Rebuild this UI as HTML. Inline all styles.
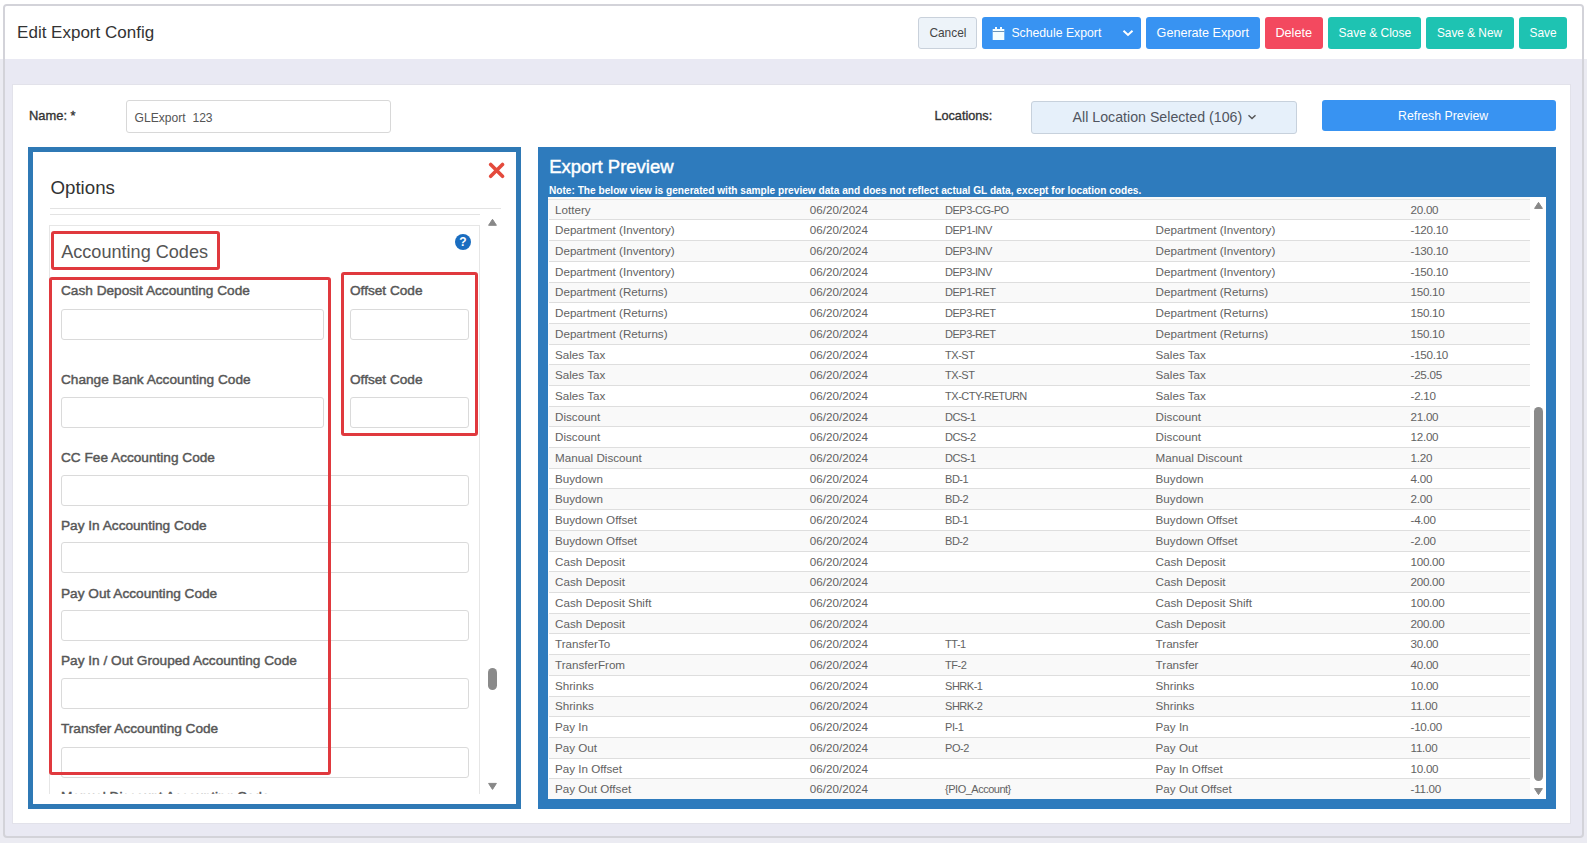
<!DOCTYPE html>
<html><head><meta charset="utf-8">
<style>
*{box-sizing:border-box;margin:0;padding:0}
html,body{width:1587px;height:843px;overflow:hidden;background:#fff;font-family:"Liberation Sans",sans-serif}
.a{position:absolute}
.t{position:absolute;white-space:pre;line-height:1}
.inp{position:absolute;height:31px;border:1px solid #dadada;border-radius:3px;background:#fff}
.red{position:absolute;border:3px solid #e0393e;border-radius:3px}
</style></head><body>
<div class="a" style="left:0;top:59px;width:1587px;height:784px;background:#ebebf2"></div>
<div class="a" style="left:3px;top:4px;width:1581px;height:834px;border:2px solid #d3d3d9;border-radius:4px;background:#e9e9f3;overflow:hidden">
  <div class="a" style="left:0;top:0;width:1580px;height:52.5px;background:#fff"></div>
</div>
<div class="t" style="left:17.10px;top:24.21px;font-size:17px;color:#333;">Edit Export Config</div>
<div class="a" style="left:918px;top:17px;width:59px;height:32px;border-radius:3px;background:#edf3f9;border:1px solid #c9d1db"></div>
<div class="t" style="left:929.40px;top:27.93px;font-size:11.9px;color:#454545;">Cancel</div>
<div class="a" style="left:982px;top:17px;width:159px;height:32px;border-radius:3px;background:#3893f2;border:none"></div>
<div class="t" style="left:1011.40px;top:26.83px;font-size:12.25px;color:#fff;">Schedule Export</div>
<div class="a" style="left:1146px;top:17px;width:114px;height:32px;border-radius:3px;background:#3893f2;border:none"></div>
<div class="t" style="left:1156.60px;top:26.53px;font-size:12.6px;color:#fff;">Generate Export</div>
<div class="a" style="left:1265px;top:17px;width:58px;height:32px;border-radius:3px;background:#f3495f;border:none"></div>
<div class="t" style="left:1275.40px;top:27.25px;font-size:12.7px;color:#fff;">Delete</div>
<div class="a" style="left:1328px;top:17px;width:93px;height:32px;border-radius:3px;background:#1ec3b2;border:none"></div>
<div class="t" style="left:1338.50px;top:27.04px;font-size:12.0px;color:#fff;">Save &amp; Close</div>
<div class="a" style="left:1426px;top:17px;width:88px;height:32px;border-radius:3px;background:#1ec3b2;border:none"></div>
<div class="t" style="left:1436.90px;top:27.77px;font-size:11.85px;color:#fff;">Save &amp; New</div>
<div class="a" style="left:1519px;top:17px;width:48px;height:32px;border-radius:3px;background:#1ec3b2;border:none"></div>
<div class="t" style="left:1529.50px;top:27.93px;font-size:11.9px;color:#fff;">Save</div>
<svg class="a" style="left:992px;top:26px" width="13" height="15" viewBox="0 0 13 15"><path d="M0.7 3H12.3V14H0.7Z" fill="#f4fdff"/><rect x="3" y="1" width="2" height="3" fill="#f4fdff"/><rect x="8" y="1" width="2" height="3" fill="#f4fdff"/><rect x="0.7" y="5" width="11.6" height="0.8" fill="#4a7aa8"/></svg>
<svg class="a" style="left:1122px;top:29px" width="12" height="8" viewBox="0 0 12 8"><path d="M1.5 1.8L6 6L10.5 1.8" fill="none" stroke="#fff" stroke-width="2"/></svg>

<div class="a" style="left:12px;top:84px;width:1559px;height:740px;background:#fff;border:1px solid #e2e2ea"></div>
<div class="t" style="left:29.00px;top:110.28px;font-size:12.9px;color:#333;-webkit-text-stroke:0.35px #333;">Name: *</div>
<div class="a" style="left:125.5px;top:100.3px;width:265.5px;height:33px;border:1px solid #d8d8d8;border-radius:3px"></div>
<div class="t" style="left:134.60px;top:111.56px;font-size:12.1px;color:#555;">GLExport  123</div>
<div class="t" style="left:934.40px;top:110.25px;font-size:12.7px;color:#333;-webkit-text-stroke:0.35px #333;">Locations:</div>
<div class="a" style="left:1031px;top:100.6px;width:266px;height:33px;background:#e6f0fa;border:1px solid #c7d1dc;border-radius:3px"></div>
<div class="t" style="left:1072.60px;top:109.98px;font-size:14.2px;color:#505560;">All Location Selected (106)</div>
<svg class="a" style="left:1247px;top:113px" width="10" height="8" viewBox="0 0 10 8"><path d="M1.5 2.2L5 5.6L8.5 2.2" fill="none" stroke="#555" stroke-width="1.4"/></svg>
<div class="a" style="left:1322px;top:100.2px;width:234px;height:31px;background:#3893f2;border-radius:3px"></div>
<div class="t" style="left:1398.00px;top:109.59px;font-size:12.3px;color:#fff;">Refresh Preview</div>

<div class="a" style="left:28px;top:147px;width:493px;height:662px;border:5px solid #2f79b5;background:#fff"></div>
<div class="t" style="left:50.50px;top:179.27px;font-size:18.7px;color:#333;">Options</div>
<svg class="a" style="left:488px;top:162px" width="17" height="17" viewBox="0 0 17 17"><path d="M2.7 2.5L14.5 14.3M14.5 2.5L2.7 14.3" stroke="#e44a3c" stroke-width="3.6" stroke-linecap="round"/></svg>
<div class="a" style="left:50px;top:208px;width:451px;height:1px;background:#e3e3e3"></div>
<div class="a" style="left:50px;top:214px;width:430px;height:1px;background:#e3e3e3"></div>
<div class="a" style="left:33px;top:215px;width:483px;height:579px;overflow:hidden">
 <div class="a" style="left:-33px;top:-215px;width:600px;height:1200px">
  <div class="a" style="left:49px;top:225px;width:431px;height:700px;border:1px solid #e6e6e6;border-bottom:none"></div>
<div class="t" style="left:61.00px;top:284.25px;font-size:13.65px;color:#575757;-webkit-text-stroke:0.45px #575757;">Cash Deposit Accounting Code</div>
<div class="inp" style="left:60.5px;top:308.5px;width:263px"></div>
<div class="t" style="left:61.00px;top:372.75px;font-size:13.65px;color:#575757;-webkit-text-stroke:0.45px #575757;">Change Bank Accounting Code</div>
<div class="inp" style="left:60.5px;top:396.5px;width:263px"></div>
<div class="t" style="left:61.00px;top:450.75px;font-size:13.65px;color:#575757;-webkit-text-stroke:0.45px #575757;">CC Fee Accounting Code</div>
<div class="inp" style="left:60.5px;top:474.7px;width:408px"></div>
<div class="t" style="left:61.00px;top:518.75px;font-size:13.65px;color:#575757;-webkit-text-stroke:0.45px #575757;">Pay In Accounting Code</div>
<div class="inp" style="left:60.5px;top:542.3px;width:408px"></div>
<div class="t" style="left:61.00px;top:586.65px;font-size:13.65px;color:#575757;-webkit-text-stroke:0.45px #575757;">Pay Out Accounting Code</div>
<div class="inp" style="left:60.5px;top:610.4px;width:408px"></div>
<div class="t" style="left:61.00px;top:654.45px;font-size:13.65px;color:#575757;-webkit-text-stroke:0.45px #575757;">Pay In / Out Grouped Accounting Code</div>
<div class="inp" style="left:60.5px;top:678.3px;width:408px"></div>
<div class="t" style="left:61.00px;top:722.15px;font-size:13.65px;color:#575757;-webkit-text-stroke:0.45px #575757;">Transfer Accounting Code</div>
<div class="inp" style="left:60.5px;top:746.6px;width:408px"></div>
<div class="t" style="left:61.00px;top:789.95px;font-size:13.65px;color:#575757;-webkit-text-stroke:0.45px #575757;">Manual Discount Accounting Code</div>
<div class="inp" style="left:60.5px;top:814.0px;width:408px"></div>
<div class="t" style="left:350.00px;top:284.25px;font-size:13.65px;color:#575757;-webkit-text-stroke:0.45px #575757;">Offset Code</div>
<div class="inp" style="left:350px;top:308.5px;width:118.5px"></div>
<div class="t" style="left:350.00px;top:372.75px;font-size:13.65px;color:#575757;-webkit-text-stroke:0.45px #575757;">Offset Code</div>
<div class="inp" style="left:350px;top:396.5px;width:118.5px"></div>
 </div>
</div>
<div class="red" style="left:51px;top:231px;width:169px;height:39px"></div>
<div class="t" style="left:61.20px;top:242.68px;font-size:18.1px;color:#555;">Accounting Codes</div>
<div class="a" style="left:454.8px;top:234px;width:16px;height:16px;border-radius:50%;background:#1a6dc0"></div>
<div class="t" style="left:459.30px;top:236.44px;font-size:12px;font-weight:bold;color:#fff;">?</div>
<div class="red" style="left:49px;top:277px;width:282px;height:498px"></div>
<div class="red" style="left:341px;top:272px;width:137px;height:164px"></div>
<svg class="a" style="left:487px;top:218px" width="11" height="9"><path d="M1.6 7.3L5.5 1.3L9.4 7.3Z" fill="#888" stroke="#888" stroke-width="1" stroke-linejoin="round"/></svg>
<svg class="a" style="left:487px;top:782px" width="11" height="9"><path d="M1.6 1.4L5.5 7.4L9.4 1.4Z" fill="#888" stroke="#888" stroke-width="1" stroke-linejoin="round"/></svg>
<div class="a" style="left:488px;top:668px;width:9px;height:22px;border-radius:4.5px;background:#8a8a8a"></div>

<div class="a" style="left:538px;top:147px;width:1018px;height:662px;background:#2e7bbd"></div>
<div class="t" style="left:549.20px;top:158.34px;font-size:18.5px;color:#fff;-webkit-text-stroke:0.45px #fff;">Export Preview</div>
<div class="t" style="left:549.00px;top:186.42px;font-size:10.14px;font-weight:bold;color:#fff;">Note: The below view is generated with sample preview data and does not reflect actual GL data, except for location codes.</div>
<div class="a" style="left:548px;top:197px;width:998px;height:602px;background:#fff"></div>
<div class="a" style="left:548px;top:197px;width:982px;height:22px;background:#f9f9f9"></div>
<div class="a" style="left:549px;top:219px;width:981px;height:1px;background:#dedede"></div>
<div class="t" style="left:555.00px;top:204.34px;font-size:11.65px;color:#626262;">Lottery</div>
<div class="t" style="left:809.80px;top:204.34px;font-size:11.65px;color:#626262;">06/20/2024</div>
<div class="t" style="left:945.10px;top:204.89px;font-size:11.0px;color:#626262;letter-spacing:-0.5px;">DEP3-CG-PO</div>
<div class="t" style="left:1410.60px;top:204.34px;font-size:11.65px;color:#626262;letter-spacing:-0.3px;">20.00</div>
<div class="a" style="left:548px;top:220px;width:982px;height:20px;background:#fff"></div>
<div class="a" style="left:549px;top:240px;width:981px;height:1px;background:#dedede"></div>
<div class="t" style="left:555.00px;top:224.34px;font-size:11.65px;color:#626262;">Department (Inventory)</div>
<div class="t" style="left:809.80px;top:224.34px;font-size:11.65px;color:#626262;">06/20/2024</div>
<div class="t" style="left:945.10px;top:224.89px;font-size:11.0px;color:#626262;letter-spacing:-0.5px;">DEP1-INV</div>
<div class="t" style="left:1155.60px;top:224.34px;font-size:11.65px;color:#626262;">Department (Inventory)</div>
<div class="t" style="left:1410.60px;top:224.34px;font-size:11.65px;color:#626262;letter-spacing:-0.3px;">-120.10</div>
<div class="a" style="left:548px;top:241px;width:982px;height:20px;background:#f9f9f9"></div>
<div class="a" style="left:549px;top:261px;width:981px;height:1px;background:#dedede"></div>
<div class="t" style="left:555.00px;top:245.34px;font-size:11.65px;color:#626262;">Department (Inventory)</div>
<div class="t" style="left:809.80px;top:245.34px;font-size:11.65px;color:#626262;">06/20/2024</div>
<div class="t" style="left:945.10px;top:245.89px;font-size:11.0px;color:#626262;letter-spacing:-0.5px;">DEP3-INV</div>
<div class="t" style="left:1155.60px;top:245.34px;font-size:11.65px;color:#626262;">Department (Inventory)</div>
<div class="t" style="left:1410.60px;top:245.34px;font-size:11.65px;color:#626262;letter-spacing:-0.3px;">-130.10</div>
<div class="a" style="left:548px;top:262px;width:982px;height:20px;background:#fff"></div>
<div class="a" style="left:549px;top:282px;width:981px;height:1px;background:#dedede"></div>
<div class="t" style="left:555.00px;top:266.34px;font-size:11.65px;color:#626262;">Department (Inventory)</div>
<div class="t" style="left:809.80px;top:266.34px;font-size:11.65px;color:#626262;">06/20/2024</div>
<div class="t" style="left:945.10px;top:266.89px;font-size:11.0px;color:#626262;letter-spacing:-0.5px;">DEP3-INV</div>
<div class="t" style="left:1155.60px;top:266.34px;font-size:11.65px;color:#626262;">Department (Inventory)</div>
<div class="t" style="left:1410.60px;top:266.34px;font-size:11.65px;color:#626262;letter-spacing:-0.3px;">-150.10</div>
<div class="a" style="left:548px;top:283px;width:982px;height:19px;background:#f9f9f9"></div>
<div class="a" style="left:549px;top:302px;width:981px;height:1px;background:#dedede"></div>
<div class="t" style="left:555.00px;top:286.34px;font-size:11.65px;color:#626262;">Department (Returns)</div>
<div class="t" style="left:809.80px;top:286.34px;font-size:11.65px;color:#626262;">06/20/2024</div>
<div class="t" style="left:945.10px;top:286.89px;font-size:11.0px;color:#626262;letter-spacing:-0.5px;">DEP1-RET</div>
<div class="t" style="left:1155.60px;top:286.34px;font-size:11.65px;color:#626262;">Department (Returns)</div>
<div class="t" style="left:1410.60px;top:286.34px;font-size:11.65px;color:#626262;letter-spacing:-0.3px;">150.10</div>
<div class="a" style="left:548px;top:303px;width:982px;height:20px;background:#fff"></div>
<div class="a" style="left:549px;top:323px;width:981px;height:1px;background:#dedede"></div>
<div class="t" style="left:555.00px;top:307.34px;font-size:11.65px;color:#626262;">Department (Returns)</div>
<div class="t" style="left:809.80px;top:307.34px;font-size:11.65px;color:#626262;">06/20/2024</div>
<div class="t" style="left:945.10px;top:307.89px;font-size:11.0px;color:#626262;letter-spacing:-0.5px;">DEP3-RET</div>
<div class="t" style="left:1155.60px;top:307.34px;font-size:11.65px;color:#626262;">Department (Returns)</div>
<div class="t" style="left:1410.60px;top:307.34px;font-size:11.65px;color:#626262;letter-spacing:-0.3px;">150.10</div>
<div class="a" style="left:548px;top:324px;width:982px;height:20px;background:#f9f9f9"></div>
<div class="a" style="left:549px;top:344px;width:981px;height:1px;background:#dedede"></div>
<div class="t" style="left:555.00px;top:328.34px;font-size:11.65px;color:#626262;">Department (Returns)</div>
<div class="t" style="left:809.80px;top:328.34px;font-size:11.65px;color:#626262;">06/20/2024</div>
<div class="t" style="left:945.10px;top:328.89px;font-size:11.0px;color:#626262;letter-spacing:-0.5px;">DEP3-RET</div>
<div class="t" style="left:1155.60px;top:328.34px;font-size:11.65px;color:#626262;">Department (Returns)</div>
<div class="t" style="left:1410.60px;top:328.34px;font-size:11.65px;color:#626262;letter-spacing:-0.3px;">150.10</div>
<div class="a" style="left:548px;top:345px;width:982px;height:19px;background:#fff"></div>
<div class="a" style="left:549px;top:364px;width:981px;height:1px;background:#dedede"></div>
<div class="t" style="left:555.00px;top:349.34px;font-size:11.65px;color:#626262;">Sales Tax</div>
<div class="t" style="left:809.80px;top:349.34px;font-size:11.65px;color:#626262;">06/20/2024</div>
<div class="t" style="left:945.10px;top:349.89px;font-size:11.0px;color:#626262;letter-spacing:-0.5px;">TX-ST</div>
<div class="t" style="left:1155.60px;top:349.34px;font-size:11.65px;color:#626262;">Sales Tax</div>
<div class="t" style="left:1410.60px;top:349.34px;font-size:11.65px;color:#626262;letter-spacing:-0.3px;">-150.10</div>
<div class="a" style="left:548px;top:365px;width:982px;height:20px;background:#f9f9f9"></div>
<div class="a" style="left:549px;top:385px;width:981px;height:1px;background:#dedede"></div>
<div class="t" style="left:555.00px;top:369.34px;font-size:11.65px;color:#626262;">Sales Tax</div>
<div class="t" style="left:809.80px;top:369.34px;font-size:11.65px;color:#626262;">06/20/2024</div>
<div class="t" style="left:945.10px;top:369.89px;font-size:11.0px;color:#626262;letter-spacing:-0.5px;">TX-ST</div>
<div class="t" style="left:1155.60px;top:369.34px;font-size:11.65px;color:#626262;">Sales Tax</div>
<div class="t" style="left:1410.60px;top:369.34px;font-size:11.65px;color:#626262;letter-spacing:-0.3px;">-25.05</div>
<div class="a" style="left:548px;top:386px;width:982px;height:20px;background:#fff"></div>
<div class="a" style="left:549px;top:406px;width:981px;height:1px;background:#dedede"></div>
<div class="t" style="left:555.00px;top:390.34px;font-size:11.65px;color:#626262;">Sales Tax</div>
<div class="t" style="left:809.80px;top:390.34px;font-size:11.65px;color:#626262;">06/20/2024</div>
<div class="t" style="left:945.10px;top:390.89px;font-size:11.0px;color:#626262;letter-spacing:-0.5px;">TX-CTY-RETURN</div>
<div class="t" style="left:1155.60px;top:390.34px;font-size:11.65px;color:#626262;">Sales Tax</div>
<div class="t" style="left:1410.60px;top:390.34px;font-size:11.65px;color:#626262;letter-spacing:-0.3px;">-2.10</div>
<div class="a" style="left:548px;top:407px;width:982px;height:19px;background:#f9f9f9"></div>
<div class="a" style="left:549px;top:426px;width:981px;height:1px;background:#dedede"></div>
<div class="t" style="left:555.00px;top:411.34px;font-size:11.65px;color:#626262;">Discount</div>
<div class="t" style="left:809.80px;top:411.34px;font-size:11.65px;color:#626262;">06/20/2024</div>
<div class="t" style="left:945.10px;top:411.89px;font-size:11.0px;color:#626262;letter-spacing:-0.5px;">DCS-1</div>
<div class="t" style="left:1155.60px;top:411.34px;font-size:11.65px;color:#626262;">Discount</div>
<div class="t" style="left:1410.60px;top:411.34px;font-size:11.65px;color:#626262;letter-spacing:-0.3px;">21.00</div>
<div class="a" style="left:548px;top:427px;width:982px;height:20px;background:#fff"></div>
<div class="a" style="left:549px;top:447px;width:981px;height:1px;background:#dedede"></div>
<div class="t" style="left:555.00px;top:431.34px;font-size:11.65px;color:#626262;">Discount</div>
<div class="t" style="left:809.80px;top:431.34px;font-size:11.65px;color:#626262;">06/20/2024</div>
<div class="t" style="left:945.10px;top:431.89px;font-size:11.0px;color:#626262;letter-spacing:-0.5px;">DCS-2</div>
<div class="t" style="left:1155.60px;top:431.34px;font-size:11.65px;color:#626262;">Discount</div>
<div class="t" style="left:1410.60px;top:431.34px;font-size:11.65px;color:#626262;letter-spacing:-0.3px;">12.00</div>
<div class="a" style="left:548px;top:448px;width:982px;height:20px;background:#f9f9f9"></div>
<div class="a" style="left:549px;top:468px;width:981px;height:1px;background:#dedede"></div>
<div class="t" style="left:555.00px;top:452.34px;font-size:11.65px;color:#626262;">Manual Discount</div>
<div class="t" style="left:809.80px;top:452.34px;font-size:11.65px;color:#626262;">06/20/2024</div>
<div class="t" style="left:945.10px;top:452.89px;font-size:11.0px;color:#626262;letter-spacing:-0.5px;">DCS-1</div>
<div class="t" style="left:1155.60px;top:452.34px;font-size:11.65px;color:#626262;">Manual Discount</div>
<div class="t" style="left:1410.60px;top:452.34px;font-size:11.65px;color:#626262;letter-spacing:-0.3px;">1.20</div>
<div class="a" style="left:548px;top:469px;width:982px;height:19px;background:#fff"></div>
<div class="a" style="left:549px;top:488px;width:981px;height:1px;background:#dedede"></div>
<div class="t" style="left:555.00px;top:473.34px;font-size:11.65px;color:#626262;">Buydown</div>
<div class="t" style="left:809.80px;top:473.34px;font-size:11.65px;color:#626262;">06/20/2024</div>
<div class="t" style="left:945.10px;top:473.89px;font-size:11.0px;color:#626262;letter-spacing:-0.5px;">BD-1</div>
<div class="t" style="left:1155.60px;top:473.34px;font-size:11.65px;color:#626262;">Buydown</div>
<div class="t" style="left:1410.60px;top:473.34px;font-size:11.65px;color:#626262;letter-spacing:-0.3px;">4.00</div>
<div class="a" style="left:548px;top:489px;width:982px;height:20px;background:#f9f9f9"></div>
<div class="a" style="left:549px;top:509px;width:981px;height:1px;background:#dedede"></div>
<div class="t" style="left:555.00px;top:493.34px;font-size:11.65px;color:#626262;">Buydown</div>
<div class="t" style="left:809.80px;top:493.34px;font-size:11.65px;color:#626262;">06/20/2024</div>
<div class="t" style="left:945.10px;top:493.89px;font-size:11.0px;color:#626262;letter-spacing:-0.5px;">BD-2</div>
<div class="t" style="left:1155.60px;top:493.34px;font-size:11.65px;color:#626262;">Buydown</div>
<div class="t" style="left:1410.60px;top:493.34px;font-size:11.65px;color:#626262;letter-spacing:-0.3px;">2.00</div>
<div class="a" style="left:548px;top:510px;width:982px;height:20px;background:#fff"></div>
<div class="a" style="left:549px;top:530px;width:981px;height:1px;background:#dedede"></div>
<div class="t" style="left:555.00px;top:514.34px;font-size:11.65px;color:#626262;">Buydown Offset</div>
<div class="t" style="left:809.80px;top:514.34px;font-size:11.65px;color:#626262;">06/20/2024</div>
<div class="t" style="left:945.10px;top:514.89px;font-size:11.0px;color:#626262;letter-spacing:-0.5px;">BD-1</div>
<div class="t" style="left:1155.60px;top:514.34px;font-size:11.65px;color:#626262;">Buydown Offset</div>
<div class="t" style="left:1410.60px;top:514.34px;font-size:11.65px;color:#626262;letter-spacing:-0.3px;">-4.00</div>
<div class="a" style="left:548px;top:531px;width:982px;height:20px;background:#f9f9f9"></div>
<div class="a" style="left:549px;top:551px;width:981px;height:1px;background:#dedede"></div>
<div class="t" style="left:555.00px;top:535.34px;font-size:11.65px;color:#626262;">Buydown Offset</div>
<div class="t" style="left:809.80px;top:535.34px;font-size:11.65px;color:#626262;">06/20/2024</div>
<div class="t" style="left:945.10px;top:535.89px;font-size:11.0px;color:#626262;letter-spacing:-0.5px;">BD-2</div>
<div class="t" style="left:1155.60px;top:535.34px;font-size:11.65px;color:#626262;">Buydown Offset</div>
<div class="t" style="left:1410.60px;top:535.34px;font-size:11.65px;color:#626262;letter-spacing:-0.3px;">-2.00</div>
<div class="a" style="left:548px;top:552px;width:982px;height:19px;background:#fff"></div>
<div class="a" style="left:549px;top:571px;width:981px;height:1px;background:#dedede"></div>
<div class="t" style="left:555.00px;top:556.34px;font-size:11.65px;color:#626262;">Cash Deposit</div>
<div class="t" style="left:809.80px;top:556.34px;font-size:11.65px;color:#626262;">06/20/2024</div>
<div class="t" style="left:1155.60px;top:556.34px;font-size:11.65px;color:#626262;">Cash Deposit</div>
<div class="t" style="left:1410.60px;top:556.34px;font-size:11.65px;color:#626262;letter-spacing:-0.3px;">100.00</div>
<div class="a" style="left:548px;top:572px;width:982px;height:20px;background:#f9f9f9"></div>
<div class="a" style="left:549px;top:592px;width:981px;height:1px;background:#dedede"></div>
<div class="t" style="left:555.00px;top:576.34px;font-size:11.65px;color:#626262;">Cash Deposit</div>
<div class="t" style="left:809.80px;top:576.34px;font-size:11.65px;color:#626262;">06/20/2024</div>
<div class="t" style="left:1155.60px;top:576.34px;font-size:11.65px;color:#626262;">Cash Deposit</div>
<div class="t" style="left:1410.60px;top:576.34px;font-size:11.65px;color:#626262;letter-spacing:-0.3px;">200.00</div>
<div class="a" style="left:548px;top:593px;width:982px;height:20px;background:#fff"></div>
<div class="a" style="left:549px;top:613px;width:981px;height:1px;background:#dedede"></div>
<div class="t" style="left:555.00px;top:597.34px;font-size:11.65px;color:#626262;">Cash Deposit Shift</div>
<div class="t" style="left:809.80px;top:597.34px;font-size:11.65px;color:#626262;">06/20/2024</div>
<div class="t" style="left:1155.60px;top:597.34px;font-size:11.65px;color:#626262;">Cash Deposit Shift</div>
<div class="t" style="left:1410.60px;top:597.34px;font-size:11.65px;color:#626262;letter-spacing:-0.3px;">100.00</div>
<div class="a" style="left:548px;top:614px;width:982px;height:19px;background:#f9f9f9"></div>
<div class="a" style="left:549px;top:633px;width:981px;height:1px;background:#dedede"></div>
<div class="t" style="left:555.00px;top:618.34px;font-size:11.65px;color:#626262;">Cash Deposit</div>
<div class="t" style="left:809.80px;top:618.34px;font-size:11.65px;color:#626262;">06/20/2024</div>
<div class="t" style="left:1155.60px;top:618.34px;font-size:11.65px;color:#626262;">Cash Deposit</div>
<div class="t" style="left:1410.60px;top:618.34px;font-size:11.65px;color:#626262;letter-spacing:-0.3px;">200.00</div>
<div class="a" style="left:548px;top:634px;width:982px;height:20px;background:#fff"></div>
<div class="a" style="left:549px;top:654px;width:981px;height:1px;background:#dedede"></div>
<div class="t" style="left:555.00px;top:638.34px;font-size:11.65px;color:#626262;">TransferTo</div>
<div class="t" style="left:809.80px;top:638.34px;font-size:11.65px;color:#626262;">06/20/2024</div>
<div class="t" style="left:945.10px;top:638.89px;font-size:11.0px;color:#626262;letter-spacing:-0.5px;">TT-1</div>
<div class="t" style="left:1155.60px;top:638.34px;font-size:11.65px;color:#626262;">Transfer</div>
<div class="t" style="left:1410.60px;top:638.34px;font-size:11.65px;color:#626262;letter-spacing:-0.3px;">30.00</div>
<div class="a" style="left:548px;top:655px;width:982px;height:20px;background:#f9f9f9"></div>
<div class="a" style="left:549px;top:675px;width:981px;height:1px;background:#dedede"></div>
<div class="t" style="left:555.00px;top:659.34px;font-size:11.65px;color:#626262;">TransferFrom</div>
<div class="t" style="left:809.80px;top:659.34px;font-size:11.65px;color:#626262;">06/20/2024</div>
<div class="t" style="left:945.10px;top:659.89px;font-size:11.0px;color:#626262;letter-spacing:-0.5px;">TF-2</div>
<div class="t" style="left:1155.60px;top:659.34px;font-size:11.65px;color:#626262;">Transfer</div>
<div class="t" style="left:1410.60px;top:659.34px;font-size:11.65px;color:#626262;letter-spacing:-0.3px;">40.00</div>
<div class="a" style="left:548px;top:676px;width:982px;height:20px;background:#fff"></div>
<div class="a" style="left:549px;top:696px;width:981px;height:1px;background:#dedede"></div>
<div class="t" style="left:555.00px;top:680.34px;font-size:11.65px;color:#626262;">Shrinks</div>
<div class="t" style="left:809.80px;top:680.34px;font-size:11.65px;color:#626262;">06/20/2024</div>
<div class="t" style="left:945.10px;top:680.89px;font-size:11.0px;color:#626262;letter-spacing:-0.5px;">SHRK-1</div>
<div class="t" style="left:1155.60px;top:680.34px;font-size:11.65px;color:#626262;">Shrinks</div>
<div class="t" style="left:1410.60px;top:680.34px;font-size:11.65px;color:#626262;letter-spacing:-0.3px;">10.00</div>
<div class="a" style="left:548px;top:697px;width:982px;height:19px;background:#f9f9f9"></div>
<div class="a" style="left:549px;top:716px;width:981px;height:1px;background:#dedede"></div>
<div class="t" style="left:555.00px;top:700.34px;font-size:11.65px;color:#626262;">Shrinks</div>
<div class="t" style="left:809.80px;top:700.34px;font-size:11.65px;color:#626262;">06/20/2024</div>
<div class="t" style="left:945.10px;top:700.89px;font-size:11.0px;color:#626262;letter-spacing:-0.5px;">SHRK-2</div>
<div class="t" style="left:1155.60px;top:700.34px;font-size:11.65px;color:#626262;">Shrinks</div>
<div class="t" style="left:1410.60px;top:700.34px;font-size:11.65px;color:#626262;letter-spacing:-0.3px;">11.00</div>
<div class="a" style="left:548px;top:717px;width:982px;height:20px;background:#fff"></div>
<div class="a" style="left:549px;top:737px;width:981px;height:1px;background:#dedede"></div>
<div class="t" style="left:555.00px;top:721.34px;font-size:11.65px;color:#626262;">Pay In</div>
<div class="t" style="left:809.80px;top:721.34px;font-size:11.65px;color:#626262;">06/20/2024</div>
<div class="t" style="left:945.10px;top:721.89px;font-size:11.0px;color:#626262;letter-spacing:-0.5px;">PI-1</div>
<div class="t" style="left:1155.60px;top:721.34px;font-size:11.65px;color:#626262;">Pay In</div>
<div class="t" style="left:1410.60px;top:721.34px;font-size:11.65px;color:#626262;letter-spacing:-0.3px;">-10.00</div>
<div class="a" style="left:548px;top:738px;width:982px;height:20px;background:#f9f9f9"></div>
<div class="a" style="left:549px;top:758px;width:981px;height:1px;background:#dedede"></div>
<div class="t" style="left:555.00px;top:742.34px;font-size:11.65px;color:#626262;">Pay Out</div>
<div class="t" style="left:809.80px;top:742.34px;font-size:11.65px;color:#626262;">06/20/2024</div>
<div class="t" style="left:945.10px;top:742.89px;font-size:11.0px;color:#626262;letter-spacing:-0.5px;">PO-2</div>
<div class="t" style="left:1155.60px;top:742.34px;font-size:11.65px;color:#626262;">Pay Out</div>
<div class="t" style="left:1410.60px;top:742.34px;font-size:11.65px;color:#626262;letter-spacing:-0.3px;">11.00</div>
<div class="a" style="left:548px;top:759px;width:982px;height:19px;background:#fff"></div>
<div class="a" style="left:549px;top:778px;width:981px;height:1px;background:#dedede"></div>
<div class="t" style="left:555.00px;top:763.34px;font-size:11.65px;color:#626262;">Pay In Offset</div>
<div class="t" style="left:809.80px;top:763.34px;font-size:11.65px;color:#626262;">06/20/2024</div>
<div class="t" style="left:1155.60px;top:763.34px;font-size:11.65px;color:#626262;">Pay In Offset</div>
<div class="t" style="left:1410.60px;top:763.34px;font-size:11.65px;color:#626262;letter-spacing:-0.3px;">10.00</div>
<div class="a" style="left:548px;top:779px;width:982px;height:20px;background:#f9f9f9"></div>
<div class="t" style="left:555.00px;top:783.34px;font-size:11.65px;color:#626262;">Pay Out Offset</div>
<div class="t" style="left:809.80px;top:783.34px;font-size:11.65px;color:#626262;">06/20/2024</div>
<div class="t" style="left:945.10px;top:783.89px;font-size:11.0px;color:#626262;letter-spacing:-0.5px;">{PIO_Account}</div>
<div class="t" style="left:1155.60px;top:783.34px;font-size:11.65px;color:#626262;">Pay Out Offset</div>
<div class="t" style="left:1410.60px;top:783.34px;font-size:11.65px;color:#626262;letter-spacing:-0.3px;">-11.00</div>
<div class="a" style="left:548px;top:199px;width:982px;height:1px;background:#e4e4e4"></div>
<svg class="a" style="left:1533px;top:201px" width="11" height="9"><path d="M1.6 7.4L5.5 1.4L9.4 7.4Z" fill="#888" stroke="#888" stroke-width="1" stroke-linejoin="round"/></svg>
<svg class="a" style="left:1533px;top:787px" width="11" height="9"><path d="M1.6 1.6L5.5 7.6L9.4 1.6Z" fill="#888" stroke="#888" stroke-width="1" stroke-linejoin="round"/></svg>
<div class="a" style="left:1534px;top:407px;width:9px;height:374px;border-radius:4.5px;background:#8a8a8a"></div>
</body></html>
